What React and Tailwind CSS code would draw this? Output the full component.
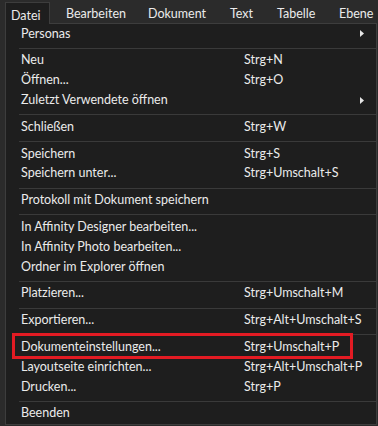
import React from "react";

const items = [
  { l: "Personas", arrow: true },
  "sep",
  { l: "Neu", s: "Strg+N" },
  { l: "Öffnen...", s: "Strg+O" },
  { l: "Zuletzt Verwendete öffnen", arrow: true },
  "sep",
  { l: "Schließen", s: "Strg+W" },
  "sep",
  { l: "Speichern", s: "Strg+S" },
  { l: "Speichern unter...", s: "Strg+Umschalt+S" },
  "sep",
  { l: "Protokoll mit Dokument speichern" },
  "sep",
  { l: "In Affinity Designer bearbeiten..." },
  { l: "In Affinity Photo bearbeiten..." },
  { l: "Ordner im Explorer öffnen" },
  "sep",
  { l: "Platzieren...", s: "Strg+Umschalt+M" },
  "sep",
  { l: "Exportieren...", s: "Strg+Alt+Umschalt+S" },
  "sep",
  { l: "Dokumenteinstellungen...", s: "Strg+Umschalt+P" },
  { l: "Layoutseite einrichten...", s: "Strg+Alt+Umschalt+P" },
  { l: "Drucken...", s: "Strg+P" },
  "sep",
  { l: "Beenden" },
];

export default function App() {
  return (
    <div className="relative w-[378px] h-[426px] overflow-hidden bg-[#2b2b2b] font-['Lato',sans-serif] text-[12.5px] leading-none text-[#ebebeb]">
      <div className="flex h-[23px] items-end">
        <div className="relative z-10 ml-[5px] -mb-px flex h-[22px] w-[45px] items-center border border-b-0 border-[#3d3d3d] bg-[#1e1e1e] pl-[5px] pt-[5px]">
          Datei
        </div>
        <div className="flex h-[22px] items-center pt-[5px]">
          <div className="ml-[16px] w-[82px]">Bearbeiten</div>
          <div className="w-[82px]">Dokument</div>
          <div className="w-[47px]">Text</div>
          <div className="w-[62px]">Tabelle</div>
          <div>Ebene</div>
        </div>
      </div>
      <div className="ml-[5px] w-[372px] border border-[#3d3d3d] bg-[#1e1e1e]">
        {items.map((it, i) =>
          it === "sep" ? (
            <div key={i} className="pt-[4px] pb-[2px] pl-[13px]">
              <div className="h-px bg-[#3a3a3a]" />
            </div>
          ) : (
            <div key={i} className="flex h-[19.8px] items-center pl-[15px]">
              <div className="w-[223px] whitespace-nowrap">{it.l}</div>
              <div className="whitespace-nowrap">{it.s || ""}</div>
              {it.arrow && (
                <svg className="ml-auto mr-[12px]" width="4" height="7" viewBox="0 0 4 7">
                  <path d="M0 0 L4 3.5 L0 7 Z" fill="#e6e6e6" />
                </svg>
              )}
            </div>
          )
        )}
      </div>
      <div className="absolute left-[12px] top-[333px] h-[26px] w-[341px] border-[3px] border-[#e31b23]" />
    </div>
  );
}
